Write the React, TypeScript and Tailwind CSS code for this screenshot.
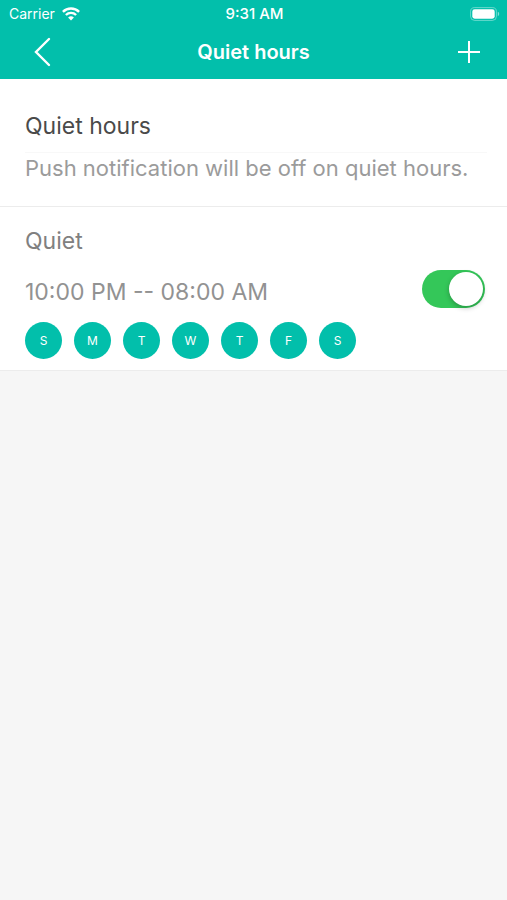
import { useState } from 'react';

const DAYS = [
  { name: 'Sunday', short: 'S' },
  { name: 'Monday', short: 'M' },
  { name: 'Tuesday', short: 'T' },
  { name: 'Wednesday', short: 'W' },
  { name: 'Thursday', short: 'T' },
  { name: 'Friday', short: 'F' },
  { name: 'Saturday', short: 'S' },
];

function StatusBar() {
  return (
    <div className="grid grid-cols-3 items-center h-7 pl-[9px] pr-[7px] text-sm">
      <div className="flex items-center gap-[7px]">
        <span>Carrier</span>
        <svg width="18" height="14" viewBox="0 0 18 14" fill="none" stroke="currentColor" strokeWidth="2.4" aria-hidden="true">
          <path d="M0.9 4.9a11.4 11.4 0 0 1 16.2 0" />
          <path d="M3.9 8a7.2 7.2 0 0 1 10.2 0" />
          <path d="M9 13.6 6.1 10.6a4.1 4.1 0 0 1 5.8 0Z" fill="currentColor" stroke="none" />
        </svg>
      </div>
      <span className="text-center text-[15px] font-medium">9:31 AM</span>
      <svg className="justify-self-end" width="30" height="14" viewBox="0 0 30 14" fill="none" aria-hidden="true">
        <rect x="0.6" y="0.6" width="25.8" height="12.8" rx="4" stroke="currentColor" strokeOpacity="0.4" />
        <rect x="2.3" y="2.3" width="22.4" height="9.4" rx="2.4" fill="currentColor" />
        <path d="M27.8 4.8v4.4a2.4 2.4 0 0 0 0-4.4Z" fill="currentColor" fillOpacity="0.5" />
      </svg>
    </div>
  );
}

function NavBar() {
  return (
    <nav className="grid grid-cols-[1fr_auto_1fr] items-center h-12 px-6">
      <button aria-label="Back" className="justify-self-start flex items-center justify-center w-9 h-10">
        <svg width="18" height="30" viewBox="0 0 18 30" fill="none" stroke="currentColor" strokeWidth="2.4" aria-hidden="true">
          <path d="M16 2 3 15l13 13" strokeLinecap="round" />
        </svg>
      </button>
      <h1 className="text-xl font-semibold">Quiet hours</h1>
      <button aria-label="Add quiet hours" className="justify-self-end flex items-center justify-center h-10">
        <svg width="28" height="28" viewBox="0 0 28 28" stroke="currentColor" strokeWidth="2" aria-hidden="true">
          <path d="M14 3v22M3 14h22" />
        </svg>
      </button>
    </nav>
  );
}

export default function App() {
  const [enabled, setEnabled] = useState(true);

  return (
    <div className="min-h-screen bg-[#f6f6f6] font-['Inter',sans-serif]">
      <header className="bg-[#02bfab] text-white pb-[3px]">
        <StatusBar />
        <NavBar />
      </header>

      <main className="bg-white">
        {/* Description */}
        <section className="pt-5 pb-[23px] border-b border-[#ececec]">
          <h2 className="ml-[25px] mr-5 h-[54px] border-b border-[#f8f8f8] text-[23px] leading-[54px] text-[#4a4a4a]">
            Quiet hours
          </h2>
          <p className="px-[25px] text-[22px] leading-[30px] text-[#9b9b9b]">
            Push notification will be off on quiet hours.
          </p>
        </section>

        {/* Schedule */}
        <section className="pl-[25px] pr-[22px] pt-[19px] pb-[11px] border-b border-[#ececec]">
          <h3 className="text-[23px] leading-[30px] text-[#808080]">Quiet</h3>
          <div className="mt-[14px] flex items-start justify-between">
            <label htmlFor="quiet-enabled" className="text-[23px] leading-[44px] text-[#929292]">
              10:00 PM -- 08:00 AM
            </label>
            <input
              id="quiet-enabled"
              type="checkbox"
              role="switch"
              checked={enabled}
              onChange={(e) => setEnabled(e.target.checked)}
              className="appearance-none shrink-0 w-[63px] h-[38px] rounded-full bg-[#e5e5e5] checked:bg-[#34c759] cursor-pointer before:block before:size-[34px] before:m-[2px] before:rounded-full before:bg-white before:shadow-[0_2px_5px_rgba(0,0,0,0.25)] checked:before:ml-[27px]"
            />
          </div>
          <ul className="mt-2 flex gap-3">
            {DAYS.map((day) => (
              <li
                key={day.name}
                title={day.name}
                className="flex items-center justify-center size-[37px] rounded-full bg-[#02bfab] text-xs text-white"
              >
                {day.short}
              </li>
            ))}
          </ul>
        </section>
      </main>
    </div>
  );
}
